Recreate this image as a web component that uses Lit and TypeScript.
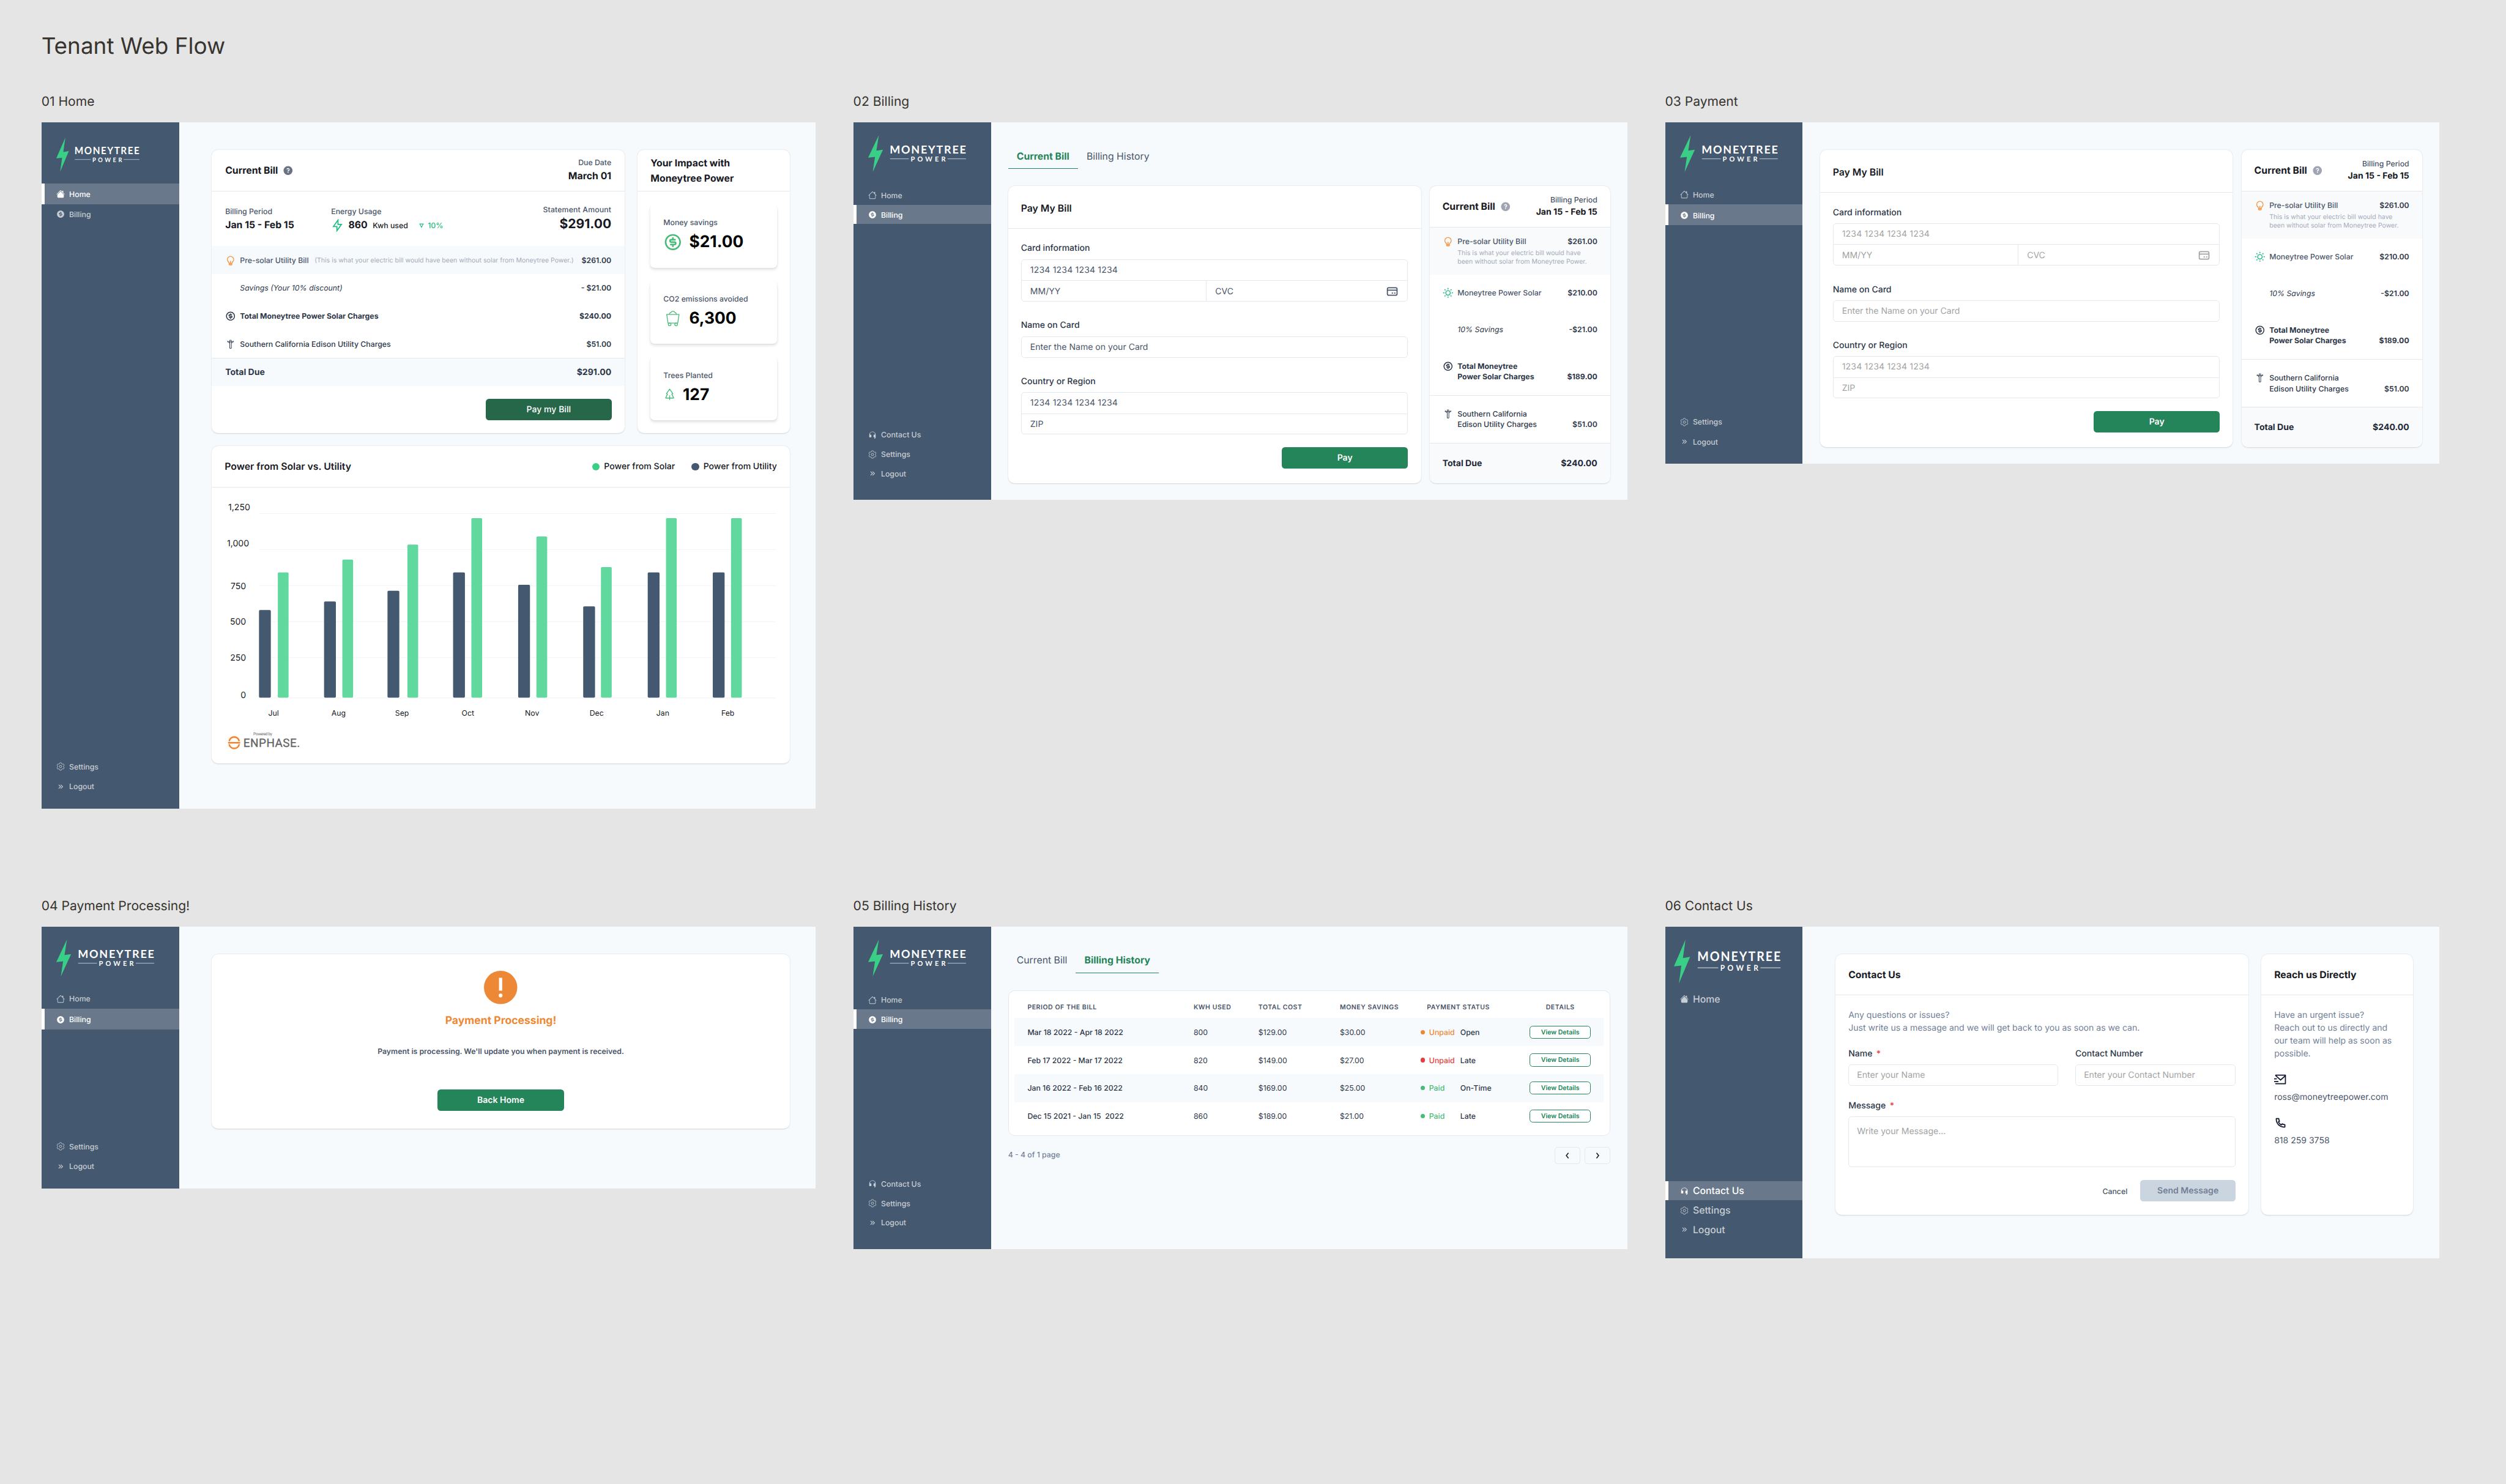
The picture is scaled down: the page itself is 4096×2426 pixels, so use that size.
import { LitElement, html, css, svg, nothing } from "lit";
import { customElement, property } from "lit/decorators.js";
import { classMap } from "lit/directives/class-map.js";

/* ---------- icons ---------- */

const DOLLAR_LINE =
  "M12 22C6.477 22 2 17.523 2 12S6.477 2 12 2s10 4.477 10 10-4.477 10-10 10zm0-2a8 8 0 1 0 0-16 8 8 0 0 0 0 16zm-3.5-6H14a.5.5 0 1 0 0-1h-4a2.5 2.5 0 1 1 0-5h1V6h2v2h2.5v2H10a.5.5 0 1 0 0 1h4a2.5 2.5 0 1 1 0 5h-1v2h-2v-2H8.5v-2z";
const DOLLAR_FILL =
  "M12 22C6.477 22 2 17.523 2 12S6.477 2 12 2s10 4.477 10 10-4.477 10-10 10zm-3.5-8v2H11v2h2v-2h1a2.5 2.5 0 1 0 0-5h-4a.5.5 0 1 1 0-1h5.5V8H13V6h-2v2h-1a2.5 2.5 0 0 0 0 5h4a.5.5 0 1 1 0 1H8.5z";
const HELP =
  "M12 22C6.477 22 2 17.523 2 12S6.477 2 12 2s10 4.477 10 10-4.477 10-10 10zm-1-7v2h2v-2h-2zm2-1.645A3.502 3.502 0 0 0 12 6.5a3.501 3.501 0 0 0-3.433 2.813l1.962.393A1.5 1.5 0 1 1 12 11.5a1 1 0 0 0-1 1V14h2v-.645z";
const BULB =
  "M9.973 18H11v-5h2v5h1.027c.132-1.202.745-2.194 1.74-3.277.113-.122.832-.867.917-.973a6 6 0 1 0-9.37-.002c.086.107.807.853.918.974.996 1.084 1.609 2.076 1.741 3.278zM10 20v1h4v-1h-4zm-4.246-5a8 8 0 1 1 12.49.002C17.624 15.774 16 17 16 18.5V21a2 2 0 0 1-2 2h-4a2 2 0 0 1-2-2v-2.5C8 17 6.375 15.774 5.754 15z";
const SUN =
  "M12 18a6 6 0 1 1 0-12 6 6 0 0 1 0 12zm0-2a4 4 0 1 0 0-8 4 4 0 0 0 0 8zM11 1h2v3h-2V1zm0 19h2v3h-2v-3zM3.515 4.929l1.414-1.414L7.05 5.636 5.636 7.05 3.515 4.93zM16.95 18.364l1.414-1.414 2.121 2.121-1.414 1.414-2.121-2.121zm2.121-14.85l1.414 1.415-2.121 2.121-1.414-1.414 2.121-2.121zM5.636 16.95l1.414 1.414-2.121 2.121-1.414-1.414 2.121-2.121zM23 11v2h-3v-2h3zM4 11v2H1v-2h3z";
const MAIL =
  "M22 20.007a1 1 0 0 1-.992.993H2.992A.993.993 0 0 1 2 20.007V19h18V7.3l-8 7.2-10-9V4a1 1 0 0 1 1-1h18a1 1 0 0 1 1 1v16.007zM4.434 5L12 11.81 19.566 5H4.434zM0 15h8v2H0v-2zm0-5h5v2H0v-2z";
const PHONE =
  "M9.366 10.682a10.556 10.556 0 0 0 3.952 3.952l.884-1.238a1 1 0 0 1 1.294-.296 11.422 11.422 0 0 0 4.583 1.364 1 1 0 0 1 .921.997v4.462a1 1 0 0 1-.898.995c-.53.055-1.064.082-1.602.082C9.94 21 3 14.06 3 5.5c0-.538.027-1.072.082-1.602A1 1 0 0 1 4.077 3h4.462a1 1 0 0 1 .997.921A11.422 11.422 0 0 0 10.9 8.504a1 1 0 0 1-.296 1.294l-1.238.884zm-2.522-.657l1.9-1.357A13.41 13.41 0 0 1 7.647 5H5.01c-.006.166-.009.333-.009.5C5 12.956 11.044 19 18.5 19c.167 0 .334-.003.5-.01v-2.637a13.41 13.41 0 0 1-3.668-1.097l-1.357 1.9a12.442 12.442 0 0 1-1.588-.75l-.058-.033a12.556 12.556 0 0 1-4.702-4.702l-.033-.058a12.442 12.442 0 0 1-.75-1.588z";
const ROOF =
  "M7.293 1.5a1 1 0 0 1 1.414 0l6.647 6.646a.5.5 0 0 1-.708.708L8 2.207 1.354 8.854a.5.5 0 1 1-.708-.708L7.293 1.5z";
const HOUSE =
  "M2 13.5V7h1v6.5a.5.5 0 0 0 .5.5h9a.5.5 0 0 0 .5-.5V7h1v6.5a1.5 1.5 0 0 1-1.5 1.5h-9A1.5 1.5 0 0 1 2 13.5zm11-11V6l-2-2V2.5a.5.5 0 0 1 .5-.5h1a.5.5 0 0 1 .5.5z";
const HOUSE_FILL =
  "m8 3.293 6 6V13.5a1.5 1.5 0 0 1-1.5 1.5h-9A1.5 1.5 0 0 1 2 13.5V9.293l6-6zm5-.793V6l-2-2V2.5a.5.5 0 0 1 .5-.5h1a.5.5 0 0 1 .5.5z";
const GEAR =
  "M924.8 625.7l-65.5-56c3.1-19 4.7-38.4 4.7-57.8s-1.6-38.8-4.7-57.8l65.5-56a32.03 32.03 0 009.3-35.2l-.9-2.6a443.74 443.74 0 00-79.7-137.9l-1.8-2.1a32.12 32.12 0 00-35.1-9.5l-81.3 28.9c-30-24.6-63.5-44-99.7-57.6l-15.7-85a32.05 32.05 0 00-25.8-25.7l-2.7-.5c-52.1-9.4-106.9-9.4-159 0l-2.7.5a32.05 32.05 0 00-25.8 25.7l-15.8 85.4a351.86 351.86 0 00-99 57.4l-81.9-29.1a32 32 0 00-35.1 9.5l-1.8 2.1a446.02 446.02 0 00-79.7 137.9l-.9 2.6c-4.5 12.5-.8 26.5 9.3 35.2l66.3 56.6c-3.1 18.8-4.6 38-4.6 57.1 0 19.2 1.5 38.4 4.6 57.1L99 625.5a32.03 32.03 0 00-9.3 35.2l.9 2.6c18.1 50.4 44.9 96.9 79.7 137.9l1.8 2.1a32.12 32.12 0 0035.1 9.5l81.9-29.1c29.8 24.5 63.1 43.9 99 57.4l15.8 85.4a32.05 32.05 0 0025.8 25.7l2.7.5a449.4 449.4 0 00159 0l2.7-.5a32.05 32.05 0 0025.8-25.7l15.7-85a350 350 0 0099.7-57.6l81.3 28.9a32 32 0 0035.1-9.5l1.8-2.1c34.8-41.1 61.6-87.5 79.7-137.9l.9-2.6c4.5-12.3.8-26.3-9.3-35z";

const glyphs: Record<string, { box: number; body: unknown }> = {
  dollar: { box: 24, body: svg`<path d=${DOLLAR_LINE} />` },
  billing: { box: 24, body: svg`<path d=${DOLLAR_FILL} />` },
  help: { box: 24, body: svg`<path d=${HELP} />` },
  bulb: { box: 24, body: svg`<path d=${BULB} />` },
  sun: { box: 24, body: svg`<path d=${SUN} />` },
  mail: { box: 24, body: svg`<path d=${MAIL} />` },
  phone: { box: 24, body: svg`<path d=${PHONE} />` },
  home: { box: 16, body: svg`<path d=${ROOF} /><path d=${HOUSE} />` },
  homeFill: { box: 16, body: svg`<path d=${ROOF} /><path d=${HOUSE_FILL} />` },
  gear: {
    box: 1024,
    body: svg`<path d=${GEAR} fill="none" stroke="currentColor" stroke-width="64" /><circle cx="512" cy="512" r="140" fill="none" stroke="currentColor" stroke-width="64" />`,
  },
  logout: {
    box: 16,
    body: svg`<path d="M4.5 4.5L8 8l-3.500 3.500M8.300 4.500L11.800 8l-3.500 3.500" fill="none" stroke="currentColor" stroke-width="1.300" />`,
  },
  headset: {
    box: 24,
    body: svg`<path d="M12 2.500A9 9 0 0 0 3 11.500V19h4.500a1.500 1.500 0 0 0 1.500-1.500v-5A1.500 1.500 0 0 0 7.500 11H5a7 7 0 0 1 14 0h-2.500a1.500 1.500 0 0 0-1.500 1.500v5a1.500 1.500 0 0 0 1.500 1.500H19c0 1-.7 1.500-2 1.500v2c2.500 0 4-1.500 4-4v-7.500A9 9 0 0 0 12 2.500z" />`,
  },
  flash: {
    box: 24,
    body: svg`<path d="M13 2v8h6.500L11 22v-8H4.500z" fill="none" stroke="currentColor" stroke-width="2" />`,
  },
  down: {
    box: 10,
    body: svg`<path d="M1.500 1.500h7L5 8.300z" fill="none" stroke="currentColor" stroke-width="1.500" />`,
  },
  pole: {
    box: 20,
    body: svg`<path d="M8.500 2.500h3v15h-3zM4 5.500h12M5 3.500v2M15 3.500v2M5.500 5.500l3 2.500M14.500 5.500l-3 2.500" fill="none" stroke="currentColor" stroke-width="1.100" />`,
  },
  cart: {
    box: 36,
    body: svg`<g fill="none" stroke="currentColor" stroke-width="1.500"><path d="M6.500 11.500h23l-2.500 16H9z" /><path d="M11 11c1-3 3-2.500 4-4 1.500-1.800 4.500-1.800 6 0 1 1.500 3 1 4 4" /><circle cx="12" cy="30" r="2.500" /><circle cx="24" cy="30" r="2.500" /></g>`,
  },
  tree: {
    box: 24,
    body: svg`<path d="M12 2.500l6 8.500-2 .5 3.500 7.500h-15L8 11.500 6 11zM12 14v8.500" fill="none" stroke="currentColor" stroke-width="1.600" stroke-linejoin="round" />`,
  },
  card: {
    box: 24,
    body: svg`<g fill="none" stroke="currentColor" stroke-width="2"><rect x="3" y="5" width="18" height="14" rx="2.500" /><path d="M3 9.500h18M11 15h2.500M15.500 15h2.500" /></g>`,
  },
  prev: {
    box: 16,
    body: svg`<path d="M9.800 3L5.800 8l4 5" fill="none" stroke="currentColor" stroke-width="1.800" />`,
  },
  next: {
    box: 16,
    body: svg`<path d="M6.200 3l4 5-4 5" fill="none" stroke="currentColor" stroke-width="1.800" />`,
  },
};

const icon = (name: string, size: number, cls = "") => html`
  <svg class="icon ${cls}" width=${size} height=${size}
    viewBox="0 0 ${glyphs[name].box} ${glyphs[name].box}" fill="currentColor">${glyphs[name].body}</svg>
`;

/* ---------- shared styles ---------- */

const shared = css`
  * {
    box-sizing: border-box;
  }
  :host {
    display: block;
  }
  .icon {
    display: block;
    flex: none;
  }
  .card {
    background: #fff;
    border-radius: 12px;
    box-shadow: 0 1px 3px rgba(0, 0, 0, 0.1), 0 1px 2px rgba(0, 0, 0, 0.06);
    overflow: hidden;
  }
  .title {
    padding-top: 2.5px;
    font-size: 18px;
    line-height: 28px;
    font-weight: 700;
    color: #171923;
  }
  .title.semi {
    font-weight: 600;
  }
  .label {
    font-size: 14px;
    line-height: 20px;
    font-weight: 500;
    color: #4a5568;
  }
  .row {
    display: flex;
    align-items: center;
  }
  .grow {
    flex: 1;
  }
  .btn {
    display: flex;
    align-items: center;
    justify-content: center;
    width: 235px;
    height: 40px;
    border-radius: 6px;
    background: #25855a;
    color: #fff;
    font-size: 16px;
    font-weight: 600;
  }
`;

/* ---------- logo and side navigation ---------- */

@customElement("mt-logo")
class MtLogo extends LitElement {
  @property({ type: Number }) w = 182;
  @property({ type: Number }) h = 68.5;

  static styles = css`
    :host {
      display: block;
    }
    svg {
      display: block;
      overflow: visible;
    }
    .name {
      font: 700 20.5px Lato, sans-serif;
      fill: #fff;
    }
    .sub {
      font: 700 12.5px Lato, sans-serif;
      fill: #fff;
    }
  `;

  render() {
    return html`
      <svg width=${this.w} height=${this.h} viewBox="0 0 182 68.5" preserveAspectRatio="none">
        <path d="M19.800 0L15.300 28.800L27.500 27L8.500 68.500L12.700 40.500L0 41.700Z" fill="#3acf87" />
        <text class="name" x="40" y="33.700" textLength="142" lengthAdjust="spacing">MONEYTREE</text>
        <text class="sub" x="79" y="49" textLength="65" lengthAdjust="spacing">POWER</text>
        <path d="M40.600 44H75.700M147.700 44H182" stroke="#c3cad2" stroke-width="1.100" />
      </svg>
    `;
  }
}

type NavItem = { label: string; icon: string };

@customElement("mt-sidebar")
class MtSidebar extends LitElement {
  @property() active = "";
  @property() variant = "base";
  @property({ type: Boolean }) contact = false;

  static styles = [
    shared,
    css`
      :host {
        width: 256px;
        flex: none;
      }
      .side {
        display: flex;
        flex-direction: column;
        height: 100%;
        background: #44586f;
      }
      .logo {
        height: 117px;
        padding: 24px 0 0 28px;
      }
      .item {
        display: flex;
        align-items: center;
        gap: 8px;
        height: 36px;
        padding: 1px 0 0 22px;
        border-left: 6px solid transparent;
        color: #c7cdd4;
        font-size: 14px;
        font-weight: 500;
      }
      .item.active {
        background: #69798b;
        border-left-color: #fff;
        color: #fff;
      }
      .foot {
        margin-top: auto;
        padding-bottom: 31px;
      }
      .late .logo {
        height: 118px;
      }
      .late .foot {
        padding-bottom: 32px;
      }
      .home .logo {
        height: 113px;
        padding-top: 28px;
      }
      .home .active {
        height: 39px;
      }
      .home .foot,
      .flow .foot {
        padding-bottom: 23px;
      }
      .home .foot .item {
        height: 37px;
      }
      .flow .logo {
        height: 115px;
        padding-top: 23.5px;
      }
      .flow .item {
        height: 37px;
      }
      .flow .item.active {
        height: 39px;
        padding-top: 3px;
      }
      .large .logo {
        height: 116px;
        padding: 24px 0 0 16px;
      }
      .large .item {
        font-size: 18px;
      }
      .large .foot {
        padding-bottom: 36px;
      }
    `,
  ];

  private item(n: NavItem) {
    const on = n.label === this.active;
    return html`<div class=${classMap({ item: true, active: on })}>
      ${icon(n.icon, 16)}<span>${n.label}</span>
    </div>`;
  }

  render() {
    const solid = this.variant === "home" || this.variant === "large";
    const size = this.variant === "home" ? [154.5, 63.3] : this.variant === "large" ? [198.3, 81.7] : [182, 68.5];
    return html`
      <nav class="side ${this.variant}">
        <div class="logo"><mt-logo .w=${size[0]} .h=${size[1]}></mt-logo></div>
        ${this.item({ label: "Home", icon: solid ? "homeFill" : "home" })}
        ${this.variant === "large" ? nothing : this.item({ label: "Billing", icon: "billing" })}
        <div class="foot">
          ${this.contact ? this.item({ label: "Contact Us", icon: "headset" }) : nothing}
          ${this.item({ label: "Settings", icon: "gear" })}
          ${this.item({ label: "Logout", icon: "logout" })}
        </div>
      </nav>
    `;
  }
}

/* ---------- 01 Home ---------- */

@customElement("mt-statement")
class MtStatement extends LitElement {
  static styles = [
    shared,
    css`
      :host {
        width: 768px;
      }
      .card {
        height: 527px;
      }
      .head {
        height: 77px;
        padding: 0 25px;
        border-bottom: 1px solid #e2e8f0;
      }
      .head .icon {
        margin-left: 9px;
        color: #6b7385;
      }
      .right {
        text-align: right;
      }
      .strong {
        padding-top: 1.5px;
        font-size: 18px;
        line-height: 28px;
        font-weight: 700;
        color: #171923;
      }
      .facts {
        display: grid;
        grid-template-columns: 197px 1fr auto;
        height: 102px;
        padding: 27.5px 25px 0;
      }
      .usage {
        display: flex;
        align-items: center;
        height: 29.5px;
      }
      .usage .flash {
        color: #1fbf83;
        margin-right: 8px;
      }
      .usage small {
        font-size: 14px;
        font-weight: 500;
        color: #171923;
        margin-left: 10px;
        padding-top: 3px;
      }
      .usage .pct {
        color: #1dbb80;
        margin-left: 7px;
      }
      .usage .down {
        color: #1dbb80;
        margin: 2px 0 0 21px;
      }
      .amount {
        font-size: 24px;
        line-height: 34px;
        font-weight: 700;
        color: #171923;
      }
      .facts .right {
        margin-top: -3px;
      }
      .facts .right .label {
        letter-spacing: 0.15px;
      }
      .line {
        display: flex;
        align-items: center;
        height: 52px;
        padding: 0 25px;
        font-size: 14px;
        font-weight: 500;
        color: #2d3748;
      }
      .line .ic {
        width: 20px;
        margin-right: 7.5px;
      }
      .line b {
        margin-left: auto;
        font-weight: 600;
      }
      .line.pre {
        background: #f6fafd;
        color: #4a5568;
      }
      .line.pre b {
        color: #2d3748;
      }
      .line.pre .icon {
        color: #f6943f;
      }
      .line i {
        font-style: italic;
        font-weight: 400;
      }
      .line.bold,
      .line.bold b {
        font-weight: 700;
      }
      .hint {
        font-size: 12px;
        font-weight: 400;
        color: #a5abb8;
        margin-left: 11px;
      }
      .line.total,
      .line.total b {
        font-size: 16px;
        font-weight: 700;
      }
      .line.total {
        background: #f6fafd;
        border-top: 1px solid #e2e8f0;
      }
      .foot {
        display: flex;
        justify-content: flex-end;
        padding: 24px;
      }
      .btn {
        background: #276749;
        font-weight: 500;
      }
    `,
  ];

  render() {
    return html`
      <section class="card">
        <header class="head row">
          <div class="title">Current Bill</div>
          ${icon("help", 20)}
          <div class="grow"></div>
          <div class="right">
            <div class="label">Due Date</div>
            <div class="strong">March 01</div>
          </div>
        </header>
        <div class="facts">
          <div>
            <div class="label">Billing Period</div>
            <div class="strong">Jan 15 - Feb 15</div>
          </div>
          <div>
            <div class="label">Energy Usage</div>
            <div class="usage strong">
              ${icon("flash", 24, "flash")}<span>860</span><small>Kwh used</small>
              ${icon("down", 9, "down")}<small class="pct">10%</small>
            </div>
          </div>
          <div class="right">
            <div class="label">Statement Amount</div>
            <div class="amount">$291.00</div>
          </div>
        </div>
        <div class="line pre">
          <span class="ic">${icon("bulb", 20)}</span>Pre-solar Utility Bill
          <span class="hint">(This is what your electric bill would have been without solar from Moneytree Power.)</span>
          <b>$261.00</b>
        </div>
        <div class="line"><span class="ic"></span><i>Savings (Your 10% discount)</i><b>- $21.00</b></div>
        <div class="line bold">
          <span class="ic">${icon("dollar", 20)}</span>Total Moneytree Power Solar Charges<b>$240.00</b>
        </div>
        <div class="line">
          <span class="ic">${icon("pole", 20)}</span>Southern California Edison Utility Charges<b>$51.00</b>
        </div>
        <div class="line total">Total Due<b>$291.00</b></div>
        <div class="foot"><div class="btn">Pay my Bill</div></div>
      </section>
    `;
  }
}

@customElement("mt-impact")
class MtImpact extends LitElement {
  static styles = [
    shared,
    css`
      :host {
        width: 283px;
      }
      .card {
        height: 527px;
      }
      .head {
        height: 77px;
        padding: 11.5px 24px 0;
        border-bottom: 1px solid #e2e8f0;
      }
      .list {
        display: grid;
        gap: 24px;
        padding: 24px;
      }
      .stat {
        height: 118px;
        padding: 24px;
        border-radius: 8px;
        background: #fff;
        box-shadow: 0 4px 6px -1px rgba(0, 0, 0, 0.1), 0 2px 4px -1px rgba(0, 0, 0, 0.06);
      }
      .value {
        display: flex;
        align-items: center;
        gap: 12px;
        height: 42px;
        margin-top: 5px;
        font-size: 30px;
        font-weight: 700;
        color: #000;
      }
      .value .icon {
        color: #48bb78;
      }
    `,
  ];

  render() {
    const stats: [string, string, number, string][] = [
      ["Money savings", "dollar", 36, "$21.00"],
      ["CO2 emissions avoided", "cart", 36, "6,300"],
      ["Trees Planted", "tree", 24, "127"],
    ];
    return html`
      <section class="card">
        <header class="head title">Your Impact with<br />Moneytree Power</header>
        <div class="list">
          ${stats.map(
            ([label, ic, size, value]) => html`<div class="stat">
              <div class="label">${label}</div>
              <div class="value">${icon(ic, size)}<span>${value}</span></div>
            </div>`
          )}
        </div>
      </section>
    `;
  }
}

/* Bars: x and top of the utility bar, x and top of the solar bar, label x, in chart units. */
const MONTHS = [
  { m: "Jul", ux: 88, ut: 305, sx: 123, st: 235, lx: 115 },
  { m: "Aug", ux: 209, ut: 289, sx: 243, st: 211, lx: 236 },
  { m: "Sep", ux: 327, ut: 269, sx: 364, st: 183, lx: 354 },
  { m: "Oct", ux: 449, ut: 235, sx: 483, st: 134, lx: 476.5 },
  { m: "Nov", ux: 570, ut: 258, sx: 604, st: 168, lx: 596 },
  { m: "Dec", ux: 691, ut: 298, sx: 724, st: 225, lx: 716 },
  { m: "Jan", ux: 811, ut: 235, sx: 845, st: 134, lx: 839 },
  { m: "Feb", ux: 932, ut: 235, sx: 966, st: 134, lx: 960 },
];
const TICKS = [
  { t: "1,250", x: 71.5, y: 119.5, line: 125.5 },
  { t: "1,000", x: 69.5, y: 186.5, line: 192.5 },
  { t: "750", x: 64, y: 266, line: 259.5 },
  { t: "500", x: 64, y: 332, line: 326.5 },
  { t: "250", x: 64, y: 399.5, line: 393.5 },
  { t: "0", x: 64, y: 468.5, line: 468.5 },
];

@customElement("mt-power-chart")
class MtPowerChart extends LitElement {
  static styles = [
    shared,
    css`
      .card {
        height: 590px;
      }
      .head {
        height: 77px;
        padding: 0 24px;
        border-bottom: 1px solid #e2e8f0;
      }
      .key {
        display: flex;
        align-items: center;
        gap: 8px;
        margin-left: 31px;
        font-size: 16px;
        font-weight: 500;
        color: #171923;
      }
      .dot {
        width: 14px;
        height: 14px;
        border-radius: 50%;
        background: #3acf87;
      }
      .dot.dark {
        background: #44586f;
      }
      svg {
        display: block;
      }
      .tick {
        font: 400 16px Inter, sans-serif;
        text-anchor: end;
        fill: #171923;
      }
      .month {
        font: 400 14px Inter, sans-serif;
        text-anchor: middle;
        fill: #171923;
      }
      .brand {
        font: 400 21.5px Roboto, sans-serif;
        fill: #666;
        stroke: #666;
        stroke-width: 0.4px;
      }
      .by {
        font: 400 7.5px Roboto, sans-serif;
        fill: #666;
      }
    `,
  ];

  render() {
    return html`
      <section class="card">
        <header class="head row">
          <div class="title semi">Power from Solar vs. Utility</div>
          <div class="grow"></div>
          <div class="key"><span class="dot"></span>Power from Solar</div>
          <div class="key"><span class="dot dark"></span>Power from Utility</div>
        </header>
        <svg width="1075" height="513" viewBox="0 77 1075 513">
          ${TICKS.map(
            (k) => svg`<path d="M88 ${k.line}H1050" stroke="#f0f1f3" />
              <text class="tick" x=${k.x} y=${k.y}>${k.t}</text>`
          )}
          ${MONTHS.map(
            (b) => svg`
              <rect x=${b.ux} y=${b.ut} width="22" height=${468 - b.ut} rx="2" fill="#44586f" />
              <rect x=${b.sx} y=${b.st} width="20" height=${468 - b.st} rx="2" fill="#61d99e" />
              <text class="month" x=${b.lx} y="501.500">${b.m}</text>`
          )}
          <g fill="none" stroke="#f5822a" stroke-width="3">
            <path d="M32.500 549a9.500 9.500 0 0 1 18.700 0" />
            <path d="M30.500 551.800h22.500" stroke-width="2.600" />
            <path d="M32.500 554.500a9.500 9.500 0 0 0 18.700 0" />
          </g>
          <text class="brand" x="59" y="559.500" textLength="105">ENPHASE.</text>
          <text class="by" x="77.500" y="537.500" textLength="35">Powered by</text>
        </svg>
      </section>
    `;
  }
}

/* ---------- 02 / 03 payment ---------- */

@customElement("mt-pay-form")
class MtPayForm extends LitElement {
  @property({ type: Boolean }) empty = false;

  static styles = [
    shared,
    css`
      :host {
        width: 768px;
      }
      .card {
        height: 552.5px;
      }
      .head {
        height: 80px;
        padding: 4px 24px 0;
        border-bottom: 1px solid #e2e8f0;
      }
      .body {
        padding: 24px 24px 0;
      }
      .name {
        margin: 0 0 8px;
        font-size: 16px;
        line-height: 24px;
        font-weight: 500;
        color: #2d3748;
      }
      .group {
        margin-bottom: 32px;
        border: 1px solid #e2e8f0;
        border-radius: 6px;
        color: #4a5568;
        font-size: 16px;
      }
      .empty .group {
        color: #a3a3a3;
      }
      .cell {
        display: flex;
        align-items: center;
        height: 38px;
        padding: 0 16px;
      }
      .num {
        letter-spacing: 0.2px;
      }
      .cell + .cell,
      .pair {
        border-top: 1px solid #e2e8f0;
      }
      .cell + .cell,
      .pair .cell {
        padding-top: 1.5px;
      }
      .pair {
        display: grid;
        grid-template-columns: 343px 1fr;
      }
      .pair .cell + .cell {
        border-top: 0;
        border-left: 1px solid #e2e8f0;
        justify-content: space-between;
      }
      .foot {
        display: flex;
        justify-content: flex-end;
        margin-top: -8px;
      }
    `,
  ];

  render() {
    return html`
      <section class="card ${this.empty ? "empty" : ""}">
        <header class="head row"><div class="title semi">Pay My Bill</div></header>
        <div class="body">
          <div class="name">Card information</div>
          <div class="group">
            <div class="cell num">1234 1234 1234 1234</div>
            <div class="pair">
              <div class="cell">MM/YY</div>
              <div class="cell">CVC ${icon("card", 24)}</div>
            </div>
          </div>
          <div class="name">Name on Card</div>
          <div class="group"><div class="cell">Enter the Name on your Card</div></div>
          <div class="name">Country or Region</div>
          <div class="group">
            <div class="cell num">1234 1234 1234 1234</div>
            <div class="cell">ZIP</div>
          </div>
          <div class="foot"><div class="btn">Pay</div></div>
        </div>
      </section>
    `;
  }
}

@customElement("mt-bill-card")
class MtBillCard extends LitElement {
  static styles = [
    shared,
    css`
      :host {
        width: 336px;
      }
      .card {
        height: 552.5px;
      }
      .head {
        height: 77px;
        padding: 0 24px;
        border-bottom: 1px solid #e2e8f0;
      }
      .head .icon {
        margin-left: 9px;
        color: #a0a5b3;
      }
      .right {
        margin-left: auto;
        text-align: right;
      }
      .span {
        padding-top: 0.5px;
        font-size: 16px;
        line-height: 24px;
        font-weight: 700;
        color: #171923;
      }
      .line {
        display: grid;
        grid-template-columns: 20px 1fr auto;
        column-gap: 8px;
        align-items: end;
        padding: 24px;
        font-size: 14px;
        line-height: 20px;
        font-weight: 500;
        color: #2d3748;
      }
      .line .icon {
        align-self: start;
      }
      .line b {
        font-weight: 600;
        color: #2d3748;
      }
      .line.soft {
        color: #4a5568;
      }
      .line.pre {
        height: 88px;
        padding: 16px 24px;
        background: #f8fafc;
      }
      .line.pre .icon {
        color: #f6943f;
      }
      .hint {
        grid-column: 2 / 4;
        margin-top: 4px;
        font-size: 12px;
        line-height: 16px;
        font-weight: 400;
        color: #a5abb8;
      }
      .sun {
        color: #1dbb80;
      }
      .line.bold,
      .line.bold b {
        font-weight: 700;
      }
      .bold {
        border-bottom: 1px solid #e2e8f0;
      }
      .italic {
        font-style: italic;
        font-weight: 400;
      }
      .italic b {
        font-style: normal;
      }
      .total {
        display: flex;
        align-items: center;
        justify-content: space-between;
        height: 75px;
        padding: 0 24px;
        border-top: 1px solid #e2e8f0;
        background: #f8fafc;
        font-size: 16px;
        font-weight: 700;
        color: #1f2937;
      }
    `,
  ];

  render() {
    return html`
      <section class="card">
        <header class="head row">
          <div class="title">Current Bill</div>
          ${icon("help", 20)}
          <div class="right">
            <div class="label">Billing Period</div>
            <div class="span">Jan 15 - Feb 15</div>
          </div>
        </header>
        <div class="line soft pre">
          ${icon("bulb", 20)}<span>Pre-solar Utility Bill</span><b>$261.00</b>
          <div class="hint">This is what your electric bill would have<br />been without solar from Moneytree Power.</div>
        </div>
        <div class="line soft">${icon("sun", 20, "sun")}<span>Moneytree Power Solar</span><b>$210.00</b></div>
        <div class="line italic"><span></span><span>10% Savings</span><b>-$21.00</b></div>
        <div class="line bold">
          ${icon("dollar", 20)}<span>Total Moneytree<br />Power Solar Charges</span><b>$189.00</b>
        </div>
        <div class="line">
          ${icon("pole", 20)}<span>Southern California<br />Edison Utility Charges</span><b>$51.00</b>
        </div>
        <div class="total"><span>Total Due</span><span>$240.00</span></div>
      </section>
    `;
  }
}

@customElement("mt-tabs")
class MtTabs extends LitElement {
  @property() active = "Current Bill";

  static styles = [
    shared,
    css`
      .tabs {
        display: flex;
        padding-top: 43px;
      }
      .tab {
        height: 43px;
        padding: 6.5px 16px 0;
        font-size: 18px;
        line-height: 28px;
        color: #4a5568;
      }
      .tab.on {
        border-bottom: 2px solid #25855a;
        color: #25855a;
        font-weight: 700;
      }
    `,
  ];

  render() {
    return html`<div class="tabs">
      ${["Current Bill", "Billing History"].map(
        (t) => html`<div class=${classMap({ tab: true, on: t === this.active })}>${t}</div>`
      )}
    </div>`;
  }
}

/* ---------- 05 Billing history ---------- */

@customElement("mt-history")
class MtHistory extends LitElement {
  static styles = [
    shared,
    css`
      .table {
        height: 271.5px;
        padding: 0 11px;
        border: 1px solid #e2e8f0;
        border-radius: 12px;
        background: #fff;
      }
      .tr {
        display: grid;
        grid-template-columns: 309px 120.5px 151.5px 150px 74px 129px 114px;
        align-items: center;
        height: 52px;
        padding-left: 24px;
        font-size: 14px;
        font-weight: 400;
        color: #2d3748;
      }
      .tr:nth-child(even) {
        background: #f6fafd;
      }
      .tr.th {
        height: 51px;
        padding-top: 10.5px;
        font-size: 12px;
        font-weight: 600;
        letter-spacing: 0.6px;
        color: #4a5568;
      }
      .th .status {
        grid-column: 5 / 7;
        padding-left: 12px;
      }
      .th .center {
        text-align: center;
      }
      .med {
        font-weight: 500;
        white-space: pre;
      }
      .state {
        display: flex;
        align-items: center;
        gap: 8px;
        font-weight: 500;
      }
      .state::before {
        content: "";
        width: 8px;
        height: 8px;
        border-radius: 50%;
        background: currentColor;
      }
      .open {
        color: #ed8936;
      }
      .late {
        color: #e53e3e;
      }
      .paid {
        color: #48bb78;
      }
      .view {
        display: flex;
        align-items: center;
        justify-content: center;
        height: 24px;
        border: 1px solid #25855a;
        border-radius: 6px;
        background: #fff;
        color: #25855a;
        font-size: 12px;
        font-weight: 600;
      }
      .pager {
        display: flex;
        align-items: center;
        gap: 8px;
        margin-top: 20px;
        font-size: 14px;
        font-weight: 500;
        color: #718096;
      }
      .pager .count {
        padding-bottom: 2px;
      }
      .pg {
        display: flex;
        align-items: center;
        justify-content: center;
        width: 48px;
        height: 32px;
        border: 1px solid #e2e8f0;
        border-radius: 6px;
        color: #171923;
      }
    `,
  ];

  render() {
    const rows = [
      ["Mar 18 2022 - Apr 18 2022", "800", "$129.00", "$30.00", "Unpaid", "Open", "open"],
      ["Feb 17 2022 - Mar 17 2022", "820", "$149.00", "$27.00", "Unpaid", "Late", "late"],
      ["Jan 16 2022 - Feb 16 2022", "840", "$169.00", "$25.00", "Paid", "On-Time", "paid"],
      ["Dec 15 2021 - Jan 15  2022", "860", "$189.00", "$21.00", "Paid", "Late", "paid"],
    ];
    return html`
      <section class="table">
        <div class="tr th">
          <span>PERIOD OF THE BILL</span><span>KWH USED</span><span>TOTAL COST</span><span>MONEY SAVINGS</span
          ><span class="status">PAYMENT STATUS</span><span class="center">DETAILS</span>
        </div>
        ${rows.map(
          ([p, k, c, s, st, w, cls]) => html`<div class="tr">
            <span class="med">${p}</span><span>${k}</span><span>${c}</span><span>${s}</span
            ><span class="state ${cls}">${st}</span><span class="med">${w}</span><span class="view">View Details</span>
          </div>`
        )}
      </section>
      <div class="pager">
        <span class="count">4 - 4 of 1 page</span><span class="grow"></span>
        <span class="pg">${icon("prev", 16)}</span><span class="pg">${icon("next", 16)}</span>
      </div>
    `;
  }
}

/* ---------- 06 Contact ---------- */

@customElement("mt-contact")
class MtContact extends LitElement {
  static styles = [
    shared,
    css`
      .wrap {
        display: grid;
        grid-template-columns: 768px 282px;
        gap: 24px;
      }
      .card {
        height: 484.5px;
      }
      .head {
        height: 77px;
        padding: 1px 24px 0;
        border-bottom: 1px solid #e2e8f0;
      }
      .body {
        padding: 24.5px 24px 0;
        font-size: 16px;
        line-height: 24px;
        color: #718096;
      }
      .fields {
        display: grid;
        grid-template-columns: 390px 298px;
        column-gap: 32px;
        margin-top: 24px;
      }
      .name {
        font-weight: 500;
        color: #2d3748;
        margin-bottom: 8px;
      }
      .name em {
        color: #e53e3e;
        font-style: normal;
        margin-left: 3px;
      }
      .input {
        height: 39.5px;
        padding: 7px 15px;
        border: 1px solid #e2e8f0;
        border-radius: 6px;
        color: #a3a3a3;
      }
      .msg {
        margin-top: 24.5px;
      }
      .area {
        height: 94.5px;
        padding-top: 15px;
      }
      .foot {
        display: flex;
        justify-content: flex-end;
        align-items: center;
        gap: 24px;
        margin-top: 24px;
      }
      .cancel {
        font-size: 14px;
        font-weight: 500;
        color: #4a5568;
        padding-top: 3px;
      }
      .btn {
        width: 177px;
        background: #cbd5e0;
        color: #718096;
      }
      .reach {
        color: #4a5568;
      }
      .reach .icon {
        margin: 23.5px 0 9px;
        color: #0f172a;
      }
      .soft {
        color: #718096;
      }
    `,
  ];

  render() {
    return html`
      <div class="wrap">
        <section class="card">
          <header class="head row"><div class="title">Contact Us</div></header>
          <div class="body">
            <div>Any questions or issues?</div>
            <div>Just write us a message and we will get back to you as soon as we can.</div>
            <div class="fields">
              <div>
                <div class="name">Name <em>*</em></div>
                <div class="input">Enter your Name</div>
              </div>
              <div>
                <div class="name">Contact Number</div>
                <div class="input">Enter your Contact Number</div>
              </div>
            </div>
            <div class="name msg">Message <em>*</em></div>
            <div class="input area">Write your Message...</div>
            <div class="foot"><span class="cancel">Cancel</span><span class="btn">Send Message</span></div>
          </div>
        </section>
        <section class="card">
          <header class="head row"><div class="title">Reach us Directly</div></header>
          <div class="body reach">
            <div class="soft">Have an urgent issue?<br />Reach out to us directly and<br />our team will help as soon as<br />possible.</div>
            ${icon("mail", 24)}
            <div>ross@moneytreepower.com</div>
            ${icon("phone", 24)}
            <div>818 259 3758</div>
          </div>
        </section>
      </div>
    `;
  }
}

/* ---------- 04 Processing ---------- */

@customElement("mt-processing")
class MtProcessing extends LitElement {
  static styles = [
    shared,
    css`
      .card {
        display: flex;
        flex-direction: column;
        align-items: center;
        height: 324px;
        padding-top: 31px;
      }
      .big {
        margin-top: 18px;
        font-size: 20px;
        line-height: 28px;
        font-weight: 700;
        color: #ed8936;
      }
      .note {
        margin: 32px 0 61px;
        font-size: 14px;
        line-height: 20px;
        font-weight: 600;
        color: #4a5568;
      }
    `,
  ];

  render() {
    return html`
      <section class="card">
        <svg width="62" height="62" viewBox="0 0 62 62">
          <circle cx="31" cy="31" r="31" fill="#ed8936" />
          <path d="M31 13v24" stroke="#fff" stroke-width="6" />
          <circle cx="31" cy="46" r="3.500" fill="#fff" />
        </svg>
        <div class="big">Payment Processing!</div>
        <div class="note">Payment is processing. We'll update you when payment is received.</div>
        <div class="btn">Back Home</div>
      </section>
    `;
  }
}

/* ---------- board ---------- */

@customElement("app-root")
class AppRoot extends LitElement {
  static styles = [
    shared,
    css`
      :host {
        width: 4096px;
        height: 2426px;
        overflow: hidden;
        background: #e5e5e5;
      }
      .board {
        zoom: 0.87878;
        width: 4661px;
        height: 2761px;
        padding: 57px 0 0 77px;
        font-family: Inter, sans-serif;
        text-rendering: geometricPrecision;
      }
      h1 {
        margin: 0;
        font-size: 42px;
        line-height: 58px;
        font-weight: 400;
        color: #37342f;
      }
      .screens {
        display: grid;
        grid-template-columns: repeat(3, 1440px);
        grid-template-rows: 1496px auto;
        column-gap: 70px;
        margin-top: 58px;
      }
      h2 {
        margin: 0;
        height: 55px;
        font-size: 24px;
        line-height: 34px;
        font-weight: 400;
        color: #37342f;
      }
      .frame {
        display: flex;
        background: #f6fafd;
      }
      .f1 {
        height: 1276px;
      }
      .f2 {
        height: 701.5px;
      }
      .f3 {
        height: 635px;
      }
      .f4 {
        height: 487px;
      }
      .f5 {
        height: 600px;
      }
      .f6 {
        height: 617px;
      }
      .wide {
        width: 1075px;
        margin: 51px 0 0 61px;
      }
      .narrow {
        width: 1120px;
        margin-left: 32px;
      }
      .pair {
        display: flex;
        gap: 24px;
      }
      .pair.tight {
        gap: 16px;
      }
      .gap {
        margin-top: 32px;
      }
      .top {
        margin-top: 51px;
      }
      .chart {
        margin-top: 24px;
      }
    `,
  ];

  render() {
    return html`
      <main class="board">
        <h1>Tenant Web Flow</h1>
        <div class="screens">
          <section>
            <h2>01 Home</h2>
            <div class="frame f1">
              <mt-sidebar variant="home" active="Home"></mt-sidebar>
              <div class="wide">
                <div class="pair">
                  <mt-statement></mt-statement>
                  <mt-impact></mt-impact>
                </div>
                <mt-power-chart class="chart"></mt-power-chart>
              </div>
            </div>
          </section>
          <section>
            <h2>02 Billing</h2>
            <div class="frame f2">
              <mt-sidebar variant="base" active="Billing" contact></mt-sidebar>
              <div class="narrow">
                <mt-tabs></mt-tabs>
                <div class="pair tight gap">
                  <mt-pay-form></mt-pay-form>
                  <mt-bill-card></mt-bill-card>
                </div>
              </div>
            </div>
          </section>
          <section>
            <h2>03 Payment</h2>
            <div class="frame f3">
              <mt-sidebar variant="flow" active="Billing"></mt-sidebar>
              <div class="narrow">
                <div class="pair tight top">
                  <mt-pay-form empty></mt-pay-form>
                  <mt-bill-card></mt-bill-card>
                </div>
              </div>
            </div>
          </section>
          <section>
            <h2>04 Payment Processing!</h2>
            <div class="frame f4">
              <mt-sidebar variant="flow" active="Billing"></mt-sidebar>
              <div class="wide"><mt-processing></mt-processing></div>
            </div>
          </section>
          <section>
            <h2>05 Billing History</h2>
            <div class="frame f5">
              <mt-sidebar variant="late" active="Billing" contact></mt-sidebar>
              <div class="narrow">
                <mt-tabs active="Billing History"></mt-tabs>
                <mt-history class="gap"></mt-history>
              </div>
            </div>
          </section>
          <section>
            <h2>06 Contact Us</h2>
            <div class="frame f6">
              <mt-sidebar variant="large" active="Contact Us" contact></mt-sidebar>
              <div class="wide"><mt-contact></mt-contact></div>
            </div>
          </section>
        </div>
      </main>
    `;
  }
}
